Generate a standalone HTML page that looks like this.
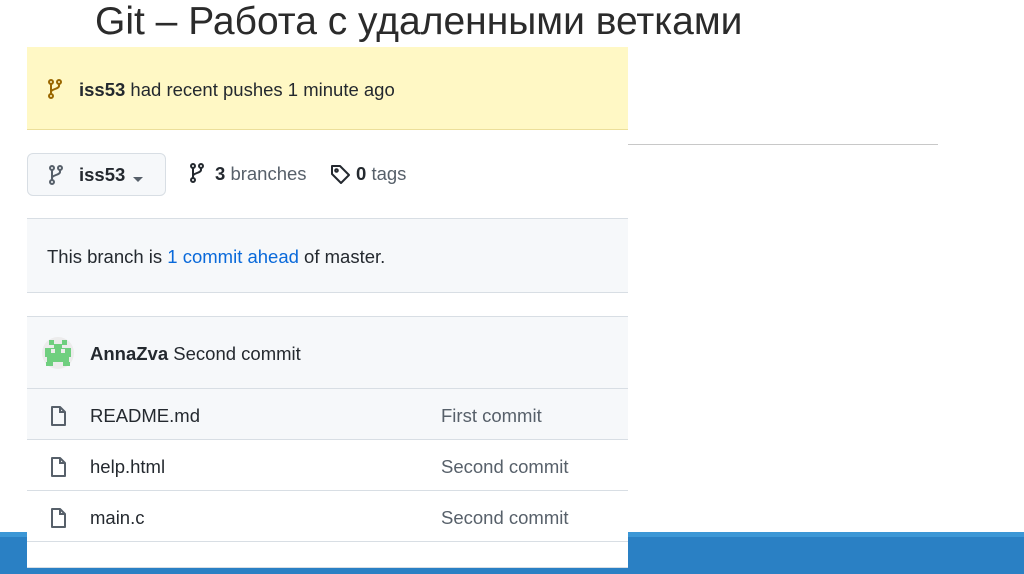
<!DOCTYPE html>
<html><head><meta charset="utf-8"><style>
*{margin:0;padding:0;box-sizing:border-box}
body{width:1024px;height:574px;background:#fff;position:relative;overflow:hidden;font-family:"Liberation Sans",sans-serif;color:#24292f}
.a{position:absolute}
.t{font-size:18.5px;white-space:nowrap}
.ico{position:absolute}
</style></head><body>
<div class="a" style="left:95px;top:0px;font-size:39px;color:#2b2b2b;white-space:nowrap">Git – Работа с удаленными ветками</div>
<div class="a" style="left:628px;top:144px;width:310px;height:1px;background:#c8c8c8"></div>
<div class="a" style="left:0;top:532px;width:1024px;height:42px;background:#2a80c4"></div>
<div class="a" style="left:0;top:532px;width:1024px;height:5px;background:#3c97d6"></div>

<div class="a" style="left:27px;top:47px;width:601px;height:83px;background:#fff8c5;border-bottom:1px solid #ecdf9a"></div>
<svg class="ico" style="left:48px;top:79px" width="14" height="20" viewBox="0 0 14 20" fill="none" stroke="#9a6700" stroke-width="2"><circle cx="3" cy="3" r="2"/><circle cx="11" cy="3" r="2"/><circle cx="3" cy="17" r="2"/><path d="M3 5v10M11 5v2c0 3-8 3-8 6"/></svg>
<div class="a t" style="left:79px;top:79px"><b style="font-weight:600">iss53</b> had recent pushes 1 minute ago</div>

<div class="a" style="left:27px;top:153px;width:139px;height:43px;background:#f6f8fa;border:1px solid #d8dee4;border-radius:6px"></div>
<svg class="ico" style="left:49px;top:165px" width="14" height="20" viewBox="0 0 14 20" fill="none" stroke="#57606a" stroke-width="2"><circle cx="3" cy="3" r="2"/><circle cx="11" cy="3" r="2"/><circle cx="3" cy="17" r="2"/><path d="M3 5v10M11 5v2c0 3-8 3-8 6"/></svg>
<div class="a t" style="left:79px;top:164px;font-weight:600">iss53</div>
<div class="a" style="left:133px;top:177px;width:0;height:0;border-left:5px solid transparent;border-right:5px solid transparent;border-top:5px solid #57606a"></div>
<svg class="ico" style="left:190px;top:163px" width="14" height="20" viewBox="0 0 14 20" fill="none" stroke="#24292f" stroke-width="2"><circle cx="3" cy="3" r="2"/><circle cx="11" cy="3" r="2"/><circle cx="3" cy="17" r="2"/><path d="M3 5v10M11 5v2c0 3-8 3-8 6"/></svg>
<div class="a t" style="left:215px;top:163px"><b style="font-weight:600">3</b> <span style="color:#57606a">branches</span></div>
<svg class="ico" style="left:330px;top:164px" width="22" height="22" viewBox="0 0 22 22" fill="none" stroke="#24292f" stroke-width="2"><path d="M2 2h8l9 9-8 8-9-9z" stroke-linejoin="round"/><circle cx="6.5" cy="6.5" r="1.3"/></svg>
<div class="a t" style="left:356px;top:163px"><b style="font-weight:600">0</b> <span style="color:#57606a">tags</span></div>

<div class="a" style="left:27px;top:218px;width:601px;height:75px;background:#f6f8fa;border-top:1px solid #d8dee4;border-bottom:1px solid #d8dee4"></div>
<div class="a t" style="left:47px;top:246px">This branch is <span style="color:#0969da">1 commit ahead</span> of master.</div>

<div class="a" style="left:27px;top:316px;width:601px;height:252px;background:#fff;border-top:1px solid #d8dee4;border-bottom:1px solid #d8dee4"></div>
<div class="a" style="left:27px;top:317px;width:601px;height:72px;background:#f6f8fa;border-bottom:1px solid #d8dee4"></div>
<div class="a" style="left:27px;top:389px;width:601px;height:51px;background:#f6f8fa;border-bottom:1px solid #d8dee4"></div>
<div class="a" style="left:27px;top:490px;width:601px;height:1px;background:#d8dee4"></div>
<div class="a" style="left:27px;top:541px;width:601px;height:1px;background:#d8dee4"></div>

<svg class="ico" style="left:42px;top:337px" width="32" height="32" viewBox="0 0 32 32"><circle cx="16" cy="16" r="16" fill="#ececec"/><g fill="#6fcf7f"><rect x="7" y="3" width="5" height="5"/><rect x="20" y="3" width="5" height="5"/><rect x="12" y="7" width="8" height="5"/><rect x="3" y="11" width="26" height="9"/><rect x="5" y="20" width="22" height="5"/><rect x="4" y="25" width="7" height="4"/><rect x="21" y="25" width="7" height="4"/></g><g fill="#ececec"><rect x="9" y="12" width="4" height="4"/><rect x="19" y="12" width="4" height="4"/></g></svg>
<div class="a t" style="left:90px;top:343px"><b style="font-weight:600">AnnaZva</b> Second commit</div>

<svg class="ico" style="left:50px;top:405px" width="17" height="22" viewBox="0 0 17 22" fill="none" stroke="#57606a" stroke-width="2"><path d="M2 2h8l5 5v13H2z" stroke-linejoin="round"/><path d="M10 2v5h5"/></svg>
<div class="a t" style="left:90px;top:405px">README.md</div>
<div class="a t" style="left:441px;top:405px;color:#57606a">First commit</div>

<svg class="ico" style="left:50px;top:456px" width="17" height="22" viewBox="0 0 17 22" fill="none" stroke="#57606a" stroke-width="2"><path d="M2 2h8l5 5v13H2z" stroke-linejoin="round"/><path d="M10 2v5h5"/></svg>
<div class="a t" style="left:90px;top:456px">help.html</div>
<div class="a t" style="left:441px;top:456px;color:#57606a">Second commit</div>

<svg class="ico" style="left:50px;top:507px" width="17" height="22" viewBox="0 0 17 22" fill="none" stroke="#57606a" stroke-width="2"><path d="M2 2h8l5 5v13H2z" stroke-linejoin="round"/><path d="M10 2v5h5"/></svg>
<div class="a t" style="left:90px;top:507px">main.c</div>
<div class="a t" style="left:441px;top:507px;color:#57606a">Second commit</div>
</body></html>
